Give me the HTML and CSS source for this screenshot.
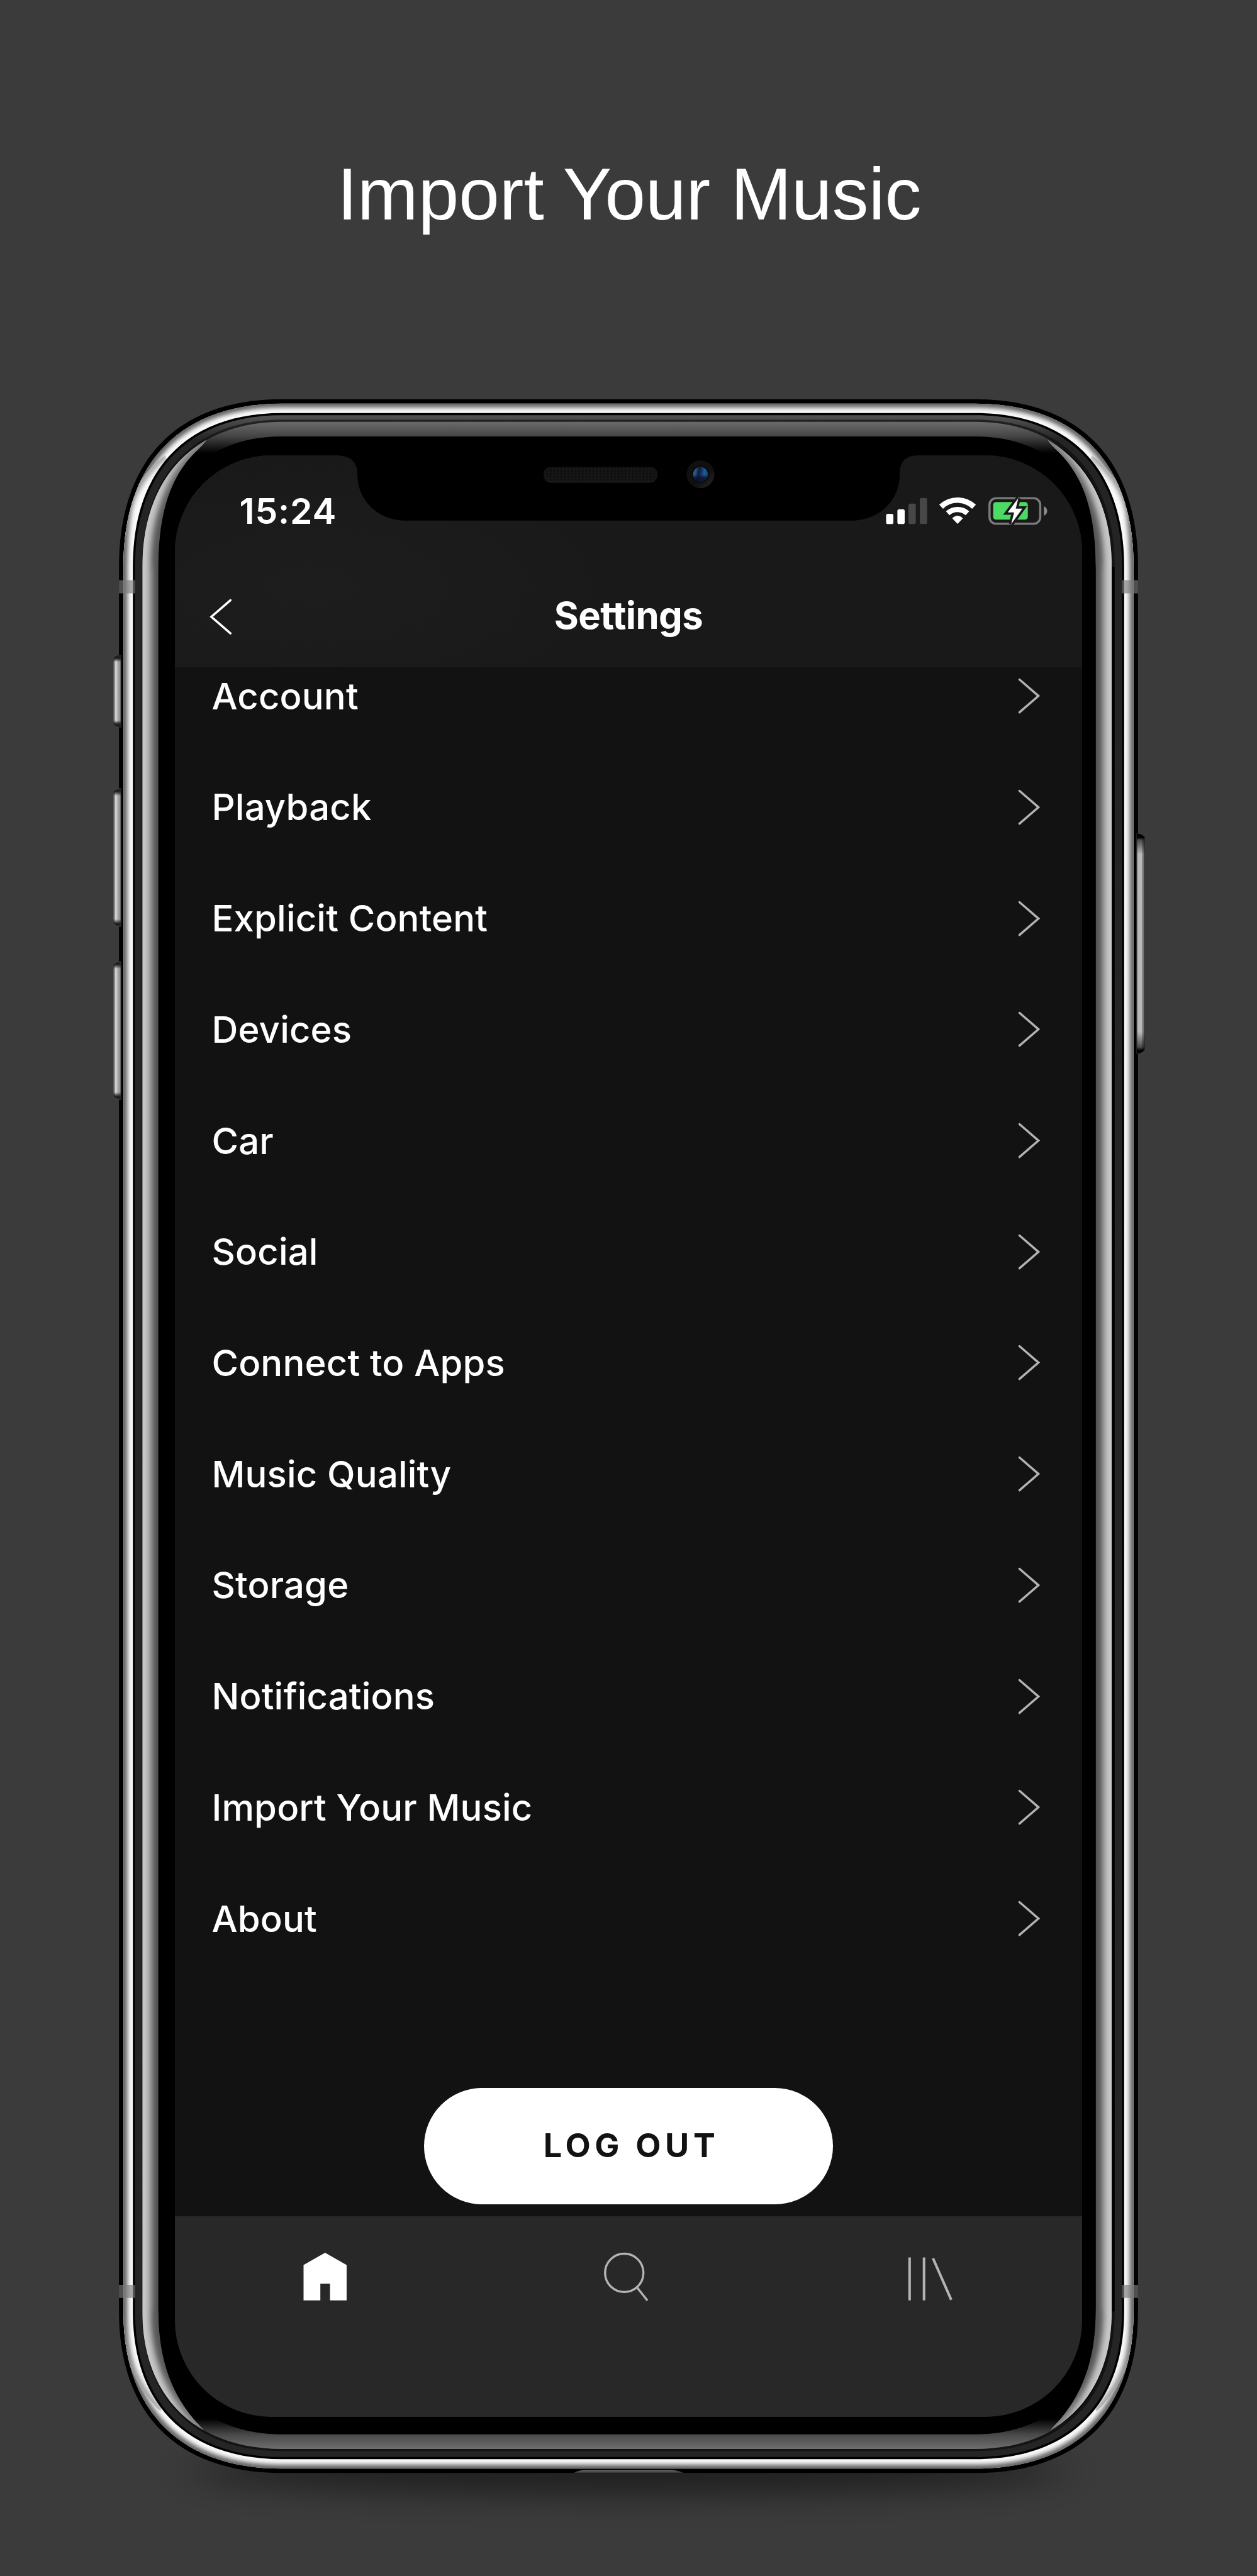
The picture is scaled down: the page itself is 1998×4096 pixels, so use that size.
FILE: index.html
```html
<!DOCTYPE html>
<html lang="en">
<head>
<meta charset="utf-8">
<title>Import Your Music</title>
<link rel="stylesheet" href="styles.css">
</head>
<body>
<main class="page">
  <h1 class="headline">Import Your Music</h1>

  <!-- Phone body -->
  <svg class="phone-frame" viewBox="0 0 3444 7060" aria-hidden="true">
    <defs>
      <path id="body-outer" d="M773 1094H2671C2960 1094 3118 1262 3118 1553V6335C3118 6614 2960 6778 2671 6778H773C484 6778 326 6614 326 6335V1553C326 1262 484 1094 773 1094Z"/>
      <path id="steel" d="M773 1106H2671C2952 1106 3106 1270 3106 1553V6335C3106 6606 2952 6766 2671 6766H773C492 6766 338 6606 338 6335V1553C338 1270 492 1106 773 1106Z"/>
      <path id="band-outer" d="M773 1156H2671C2911 1156 3046 1310 3046 1553V6335C3046 6566 2911 6712 2671 6712H773C533 6712 390 6566 390 6335V1553C390 1310 533 1156 773 1156Z"/>
      <path id="band-inner" d="M773 1196H2671C2880 1196 3002 1326 3002 1553V6335C3002 6542 2880 6672 2671 6672H773C564 6672 434 6542 434 6335V1553C434 1326 564 1196 773 1196Z"/>
      <clipPath id="steel-clip"><use href="#steel"/></clipPath>
      <clipPath id="band-clip"><use href="#band-outer"/></clipPath>
      <!-- Side reflections taper to a point at each corner -->
      <clipPath id="glint-clip"><path id="glint" d="M570 1100V1191C570 1208 548 1226 532 1242C470 1305 434 1400 434 1553V6335C434 6465 470 6560 532 6632C548 6650 561 6662 566 6673V6760H350V1100Z"/></clipPath>
      <path id="glint-inner" d="M570 1180V1191C570 1208 548 1226 532 1242C470 1305 434 1400 434 1553M434 6335C434 6465 470 6560 532 6632C548 6650 561 6662 566 6673V6680"/>
      <clipPath id="sliver-clip"><path d="M452 1247C400 1290 362 1340 350 1400C342 1450 338 1500 338 1553V6335C338 6385 342 6425 350 6458C362 6510 390 6560 440 6610L480 6500V1300Z"/></clipPath>
      <filter id="soft" filterUnits="userSpaceOnUse" x="200" y="1000" width="3044" height="5900"><feGaussianBlur stdDeviation="6"/></filter>
      <filter id="softer" filterUnits="userSpaceOnUse" x="200" y="1000" width="3044" height="5900"><feGaussianBlur stdDeviation="10"/></filter>
      <filter id="ground" filterUnits="userSpaceOnUse" x="0" y="6400" width="3444" height="660"><feGaussianBlur stdDeviation="62 42"/></filter>
      <linearGradient id="sliver-tone" gradientUnits="userSpaceOnUse" x1="0" y1="1240" x2="0" y2="6620">
        <stop offset="0" stop-color="#b0b0b0"/><stop offset=".024" stop-color="#8c8c8c"/><stop offset=".05" stop-color="#606060"/>
        <stop offset=".95" stop-color="#606060"/><stop offset=".976" stop-color="#8c8c8c"/><stop offset="1" stop-color="#b0b0b0"/>
      </linearGradient>
      <linearGradient id="band-fill" gradientUnits="userSpaceOnUse" x1="0" y1="1156" x2="0" y2="6712">
        <stop offset="0" stop-color="#6b6b6b"/><stop offset=".0072" stop-color="#444"/><stop offset=".0155" stop-color="#000"/>
        <stop offset=".985" stop-color="#000"/><stop offset=".9928" stop-color="#484848"/><stop offset="1" stop-color="#6e6e6e"/>
      </linearGradient>
      <linearGradient id="gasket-fill" gradientUnits="userSpaceOnUse" x1="0" y1="1138" x2="0" y2="6734">
        <stop offset="0" stop-color="#545454"/><stop offset=".012" stop-color="#242424"/><stop offset="1" stop-color="#252525"/>
      </linearGradient>
      <linearGradient id="rim-fill" gradientUnits="userSpaceOnUse" x1="0" y1="1150" x2="0" y2="6718">
        <stop offset="0" stop-color="#232323"/><stop offset=".012" stop-color="#131313"/><stop offset="1" stop-color="#131313"/>
      </linearGradient>
      <linearGradient id="key-left" x1="0" x2="1" y1="0" y2="0">
        <stop offset="0" stop-color="#4a4a4a"/><stop offset=".25" stop-color="#a8a8a8"/><stop offset=".3" stop-color="#dcdcdc"/><stop offset=".52" stop-color="#bcbcbc"/><stop offset=".58" stop-color="#a2a2a2"/><stop offset=".82" stop-color="#989898"/><stop offset="1" stop-color="#383838"/>
      </linearGradient>
      <linearGradient id="key-right" x1="0" x2="1" y1="0" y2="0">
        <stop offset="0" stop-color="#6a6a6a"/><stop offset=".2" stop-color="#b8b8b8"/><stop offset=".62" stop-color="#bcbcbc"/><stop offset=".66" stop-color="#959595"/><stop offset=".85" stop-color="#7c7c7c"/><stop offset="1" stop-color="#2e2e2e"/>
      </linearGradient>
      <linearGradient id="cap-short" x1="0" x2="0" y1="0" y2="1">
        <stop offset="0" stop-color="#202020"/><stop offset=".05" stop-color="#202020"/><stop offset=".1" stop-color="#202020" stop-opacity="0"/><stop offset=".9" stop-color="#202020" stop-opacity="0"/><stop offset=".95" stop-color="#202020"/><stop offset="1" stop-color="#202020"/>
      </linearGradient>
      <linearGradient id="cap-long" x1="0" x2="0" y1="0" y2="1">
        <stop offset="0" stop-color="#222"/><stop offset=".025" stop-color="#222"/><stop offset=".055" stop-color="#222" stop-opacity="0"/><stop offset=".945" stop-color="#222" stop-opacity="0"/><stop offset=".975" stop-color="#222"/><stop offset="1" stop-color="#222"/>
      </linearGradient>
      <linearGradient id="cap-power" x1="0" x2="0" y1="0" y2="1">
        <stop offset="0" stop-color="#000"/><stop offset=".018" stop-color="#000"/><stop offset=".03" stop-color="#000" stop-opacity=".6"/><stop offset=".095" stop-color="#000" stop-opacity="0"/><stop offset=".9" stop-color="#000" stop-opacity="0"/><stop offset=".97" stop-color="#000" stop-opacity=".6"/><stop offset=".985" stop-color="#000"/><stop offset="1" stop-color="#000"/>
      </linearGradient>
      <linearGradient id="port-fill" x1="0" x2="0" y1="0" y2="1">
        <stop offset="0" stop-color="#8a8a8a"/><stop offset=".5" stop-color="#484848"/><stop offset="1" stop-color="#333"/>
      </linearGradient>
    </defs>

    <ellipse cx="1722" cy="6775" rx="1190" ry="62" fill="#000" opacity=".46" filter="url(#ground)"/>

    <use href="#body-outer" fill="#000"/>
    <use href="#steel" fill="#fafafa"/>
    <g clip-path="url(#steel-clip)">
      <use href="#steel" fill="none" stroke="#606060" stroke-width="22" filter="url(#soft)"/>
      <g id="sliver" clip-path="url(#sliver-clip)">
        <path d="M330 1200H480V6700H330Z" fill="#fafafa"/>
        <path d="M452 1247C400 1290 362 1340 350 1400C342 1450 338 1500 338 1553V6335C338 6385 342 6425 350 6458C362 6510 390 6560 440 6610" fill="none" stroke="url(#sliver-tone)" stroke-width="22" filter="url(#soft)"/>
      </g>
      <use href="#sliver" transform="matrix(-1 0 0 1 3444 0)"/>
    </g>
    <path d="M773 1132H2671C2934 1132 3080 1288 3080 1553V6335C3080 6588 2934 6740 2671 6740H773C510 6740 364 6588 364 6335V1553C364 1288 510 1132 773 1132Z"/>
    <path d="M773 1138H2671C2930 1138 3074 1292 3074 1553V6335C3074 6584 2930 6734 2671 6734H773C514 6734 370 6584 370 6335V1553C370 1292 514 1138 773 1138Z" fill="url(#gasket-fill)"/>
    <path d="M773 1150H2671C2916 1150 3054 1304 3054 1553V6335C3054 6572 2916 6718 2671 6718H773C528 6718 389 6572 389 6335V1553C389 1304 528 1150 773 1150Z" fill="url(#rim-fill)"/>
    <path d="M3046 1553H3054V6335H3046Z"/>
    <use href="#band-outer" fill="url(#band-fill)"/>
    <use href="#band-inner" fill="#000"/>
    <g id="side-glint" clip-path="url(#band-clip)"><g clip-path="url(#glint-clip)">
      <use href="#glint" fill="#505050"/>
      <use href="#band-outer" fill="none" stroke="#c8c8c8" stroke-width="48" filter="url(#softer)"/>
      <use href="#glint-inner" fill="none" stroke="#585858" stroke-width="22" opacity=".85" filter="url(#softer)"/>
    </g></g>
    <use href="#side-glint" transform="matrix(-1 0 0 1 3436 0)"/>

    <!-- Antenna lines -->
    <path d="M326 1590H370V1626H326ZM3074 1590H3118V1626H3074ZM326 6262H370V6298H326ZM3074 6262H3118V6298H3074Z" fill="#7b7b7b" fill-opacity=".65"/>

    <!-- Side keys -->
    <path d="M332 1794H326Q310 1794 310 1812V1976Q310 1994 326 1994H332Z" fill="url(#key-left)"/>
    <path d="M332 1794H326Q310 1794 310 1812V1976Q310 1994 326 1994H332Z" fill="url(#cap-short)"/>
    <path d="M332 2160H326Q310 2163 310 2174V2524Q310 2537 326 2540H332Z" fill="url(#key-left)"/>
    <path d="M332 2160H326Q310 2163 310 2174V2524Q310 2537 326 2540H332Z" fill="url(#cap-long)"/>
    <path d="M332 2634H326Q310 2637 310 2648V2998Q310 3011 326 3014H332Z" fill="url(#key-left)"/>
    <path d="M332 2634H326Q310 2637 310 2648V2998Q310 3011 326 3014H332Z" fill="url(#cap-long)"/>
    <path d="M3114 2284H3120Q3130 2286 3136 2294V2876Q3134 2884 3120 2888H3114Z" fill="url(#key-right)"/>
    <path d="M3114 2284H3120Q3130 2286 3136 2294V2876Q3134 2884 3120 2888H3114Z" fill="url(#cap-power)"/>
    <path d="M1572 6778Q1582 6770 1605 6770H1840Q1862 6771 1872 6778Z" fill="url(#port-fill)"/>
  </svg>

  <section class="screen">
    <svg class="notch" viewBox="480 1248 2484 190" aria-hidden="true">
      <defs>
        <pattern id="mesh" width="9.8" height="8.6" patternUnits="userSpaceOnUse"><path d="M0 0H9.8V8.6H0Z" fill="#0d0d0d"/><path d="M3 0H7V8.6H3ZM0 3H9.8V6H0Z" fill="#171717"/></pattern>
        <linearGradient id="cam" x1="0" y1="0" x2="1" y2="1"><stop offset=".6" stop-color="#101010"/><stop offset="1" stop-color="#2a2a2a"/></linearGradient>
        <linearGradient id="lens" x1="0" y1="0" x2="1" y2=".15"><stop offset="0" stop-color="#2f6aa5"/><stop offset=".22" stop-color="#24558a"/><stop offset=".42" stop-color="#111c3c"/><stop offset=".6" stop-color="#16345f"/><stop offset=".8" stop-color="#1f5a98"/><stop offset="1" stop-color="#1b4d85"/></linearGradient>
        <linearGradient id="lens-shade" x1="0" y1="0" x2="0" y2="1"><stop offset=".5" stop-color="#0b1430" stop-opacity="0"/><stop offset=".75" stop-color="#0b1430" stop-opacity=".9"/></linearGradient>
      </defs>
      <path d="M900 1240V1248H918C962 1248 980 1265 980 1300C980 1375 1040 1427 1112 1427H2334C2406 1427 2466 1375 2466 1300C2466 1265 2480 1248 2520 1248H2540V1240Z"/>
      <rect x="1490" y="1282" width="312" height="41" rx="20.5" fill="#191919"/>
      <rect x="1490" y="1280" width="312" height="38" rx="19" fill="url(#mesh)"/>
      <circle cx="1920" cy="1300" r="38" fill="url(#cam)"/>
      <circle cx="1920" cy="1300" r="24" fill="#0b0b0b"/>
      <circle cx="1920" cy="1300" r="20" fill="url(#lens)"/>
      <circle cx="1920" cy="1300" r="20" fill="url(#lens-shade)"/>
    </svg>

    <header class="top">
      <div class="status">
        <span class="clock">15:24</span>
        <svg class="status-icons" viewBox="2420 1350 456 98" aria-label="Signal, Wi-Fi and charging battery">
          <rect x="2427.6" y="1407" width="20" height="28" rx="5" fill="#fff"/>
          <rect x="2458.6" y="1394.5" width="20" height="40.5" rx="5" fill="#fff"/>
          <rect x="2489" y="1379" width="20" height="56" rx="5" fill="#474747"/>
          <rect x="2520" y="1363.5" width="20" height="71.5" rx="5" fill="#474747"/>
          <g fill="none" stroke="#fff">
            <path d="M2578.5 1387.5A65 65 0 0 1 2668.5 1387.5" stroke-width="15"/>
            <path d="M2596.5 1405.5A40 40 0 0 1 2650.5 1405.5" stroke-width="14.5"/>
          </g>
          <path d="M2609 1419.5Q2623.5 1405 2638 1419.5L2623.5 1434.5Z" fill="#fff"/>
          <rect x="2711" y="1364" width="139" height="70" rx="18" fill="none" stroke="#7b7b7b" stroke-width="6"/>
          <rect x="2721" y="1374.5" width="95" height="48.5" rx="8" fill="#4cd964"/>
          <path d="M2860 1386Q2869 1390 2869 1399T2860 1412Z" fill="#8b8b8b"/>
          <path d="M2790 1364L2761 1403H2778.5L2770.5 1435L2801 1392.5H2783Z" fill="none" stroke="#191919" stroke-width="13"/>
          <path d="M2790 1364L2761 1403H2778.5L2770.5 1435L2801 1392.5H2783Z" fill="#fff"/>
        </svg>
      </div>
      <div class="nav">
        <svg class="back" viewBox="570 1636 70 106" aria-label="Back"><path d="M631 1643.5L578.5 1689L631 1734.5" fill="none" stroke="#fff" stroke-width="6" stroke-linecap="round"/></svg>
        <h2 class="nav-title">Settings</h2>
      </div>
    </header>

    <div class="content">
      <ul class="menu">
        <li class="row">Account<svg class="chevron" viewBox="0 0 66 102"><path d="M6 6L58 51L6 96"/></svg></li>
        <li class="row">Playback<svg class="chevron" viewBox="0 0 66 102"><path d="M6 6L58 51L6 96"/></svg></li>
        <li class="row">Explicit Content<svg class="chevron" viewBox="0 0 66 102"><path d="M6 6L58 51L6 96"/></svg></li>
        <li class="row">Devices<svg class="chevron" viewBox="0 0 66 102"><path d="M6 6L58 51L6 96"/></svg></li>
        <li class="row">Car<svg class="chevron" viewBox="0 0 66 102"><path d="M6 6L58 51L6 96"/></svg></li>
        <li class="row">Social<svg class="chevron" viewBox="0 0 66 102"><path d="M6 6L58 51L6 96"/></svg></li>
        <li class="row">Connect to Apps<svg class="chevron" viewBox="0 0 66 102"><path d="M6 6L58 51L6 96"/></svg></li>
        <li class="row">Music Quality<svg class="chevron" viewBox="0 0 66 102"><path d="M6 6L58 51L6 96"/></svg></li>
        <li class="row">Storage<svg class="chevron" viewBox="0 0 66 102"><path d="M6 6L58 51L6 96"/></svg></li>
        <li class="row">Notifications<svg class="chevron" viewBox="0 0 66 102"><path d="M6 6L58 51L6 96"/></svg></li>
        <li class="row">Import Your Music<svg class="chevron" viewBox="0 0 66 102"><path d="M6 6L58 51L6 96"/></svg></li>
        <li class="row">About<svg class="chevron" viewBox="0 0 66 102"><path d="M6 6L58 51L6 96"/></svg></li>
      </ul>
      <button class="logout" type="button">LOG OUT</button>
    </div>

    <nav class="tabs">
      <svg class="tab" viewBox="480 6075 828 549" aria-label="Home"><path d="M891.5 6175L950.5 6208.5V6305.5H905V6260H878.5V6305.5H832.5V6208.5Z" fill="#fff"/></svg>
      <svg class="tab" viewBox="1308 6075 828 549" aria-label="Search"><g fill="none" stroke="#b3b3b3" stroke-width="6"><circle cx="1710" cy="6230" r="52.5"/><path d="M1745 6270L1773.5 6306"/></g></svg>
      <svg class="tab" viewBox="2136 6075 828 549" aria-label="Your Library"><path d="M2492.5 6188V6305.5M2532 6188V6305.5M2556.5 6190L2606.5 6304" fill="none" stroke="#b3b3b3" stroke-width="7"/></svg>
    </nav>
  </section>
</main>
</body>
</html>
```
FILE: styles.css
```css
:root {
  /* one design unit: the artboard is 3444 units wide */
  --u: calc(1998px / 3444);
}

* { box-sizing: border-box; }

body {
  margin: 0;
  background: #3b3b3b;
  color: #fff;
  font-family: Inter, "Liberation Sans", sans-serif;
}

.page {
  position: relative;
  width: 1998px;
  height: 4096px;
  overflow: hidden;
  display: flex;
  flex-direction: column;
  background: #3b3b3b;
}

.headline {
  margin: 0;
  height: calc(1248 * var(--u));
  padding-bottom: calc(183 * var(--u));
  padding-left: calc(4 * var(--u));
  display: flex;
  align-items: center;
  justify-content: center;
  font: 400 calc(200 * var(--u)) "Liberation Sans", Arial, sans-serif;
}

.phone-frame {
  position: absolute;
  inset: 0;
  width: 100%;
  height: 100%;
}

.screen {
  position: relative;
  width: calc(2484 * var(--u));
  height: calc(5376 * var(--u));
  margin-left: calc(480 * var(--u));
  border-radius: calc(265 * var(--u));
  overflow: hidden;
  display: flex;
  flex-direction: column;
  background: #121212;
}

.notch {
  position: absolute;
  top: 0;
  left: 0;
  width: 100%;
}

.top {
  flex: none;
  height: calc(581 * var(--u));
  background: radial-gradient(ellipse 34% 62% at 15% 62%, #1d1d1d, #1b1b1b 60%, #191919) #191919;
}

.status {
  height: calc(304 * var(--u));
  padding: 0 calc(88 * var(--u)) 0 calc(176 * var(--u));
  display: flex;
  align-items: center;
  justify-content: space-between;
}

.clock {
  font-size: calc(98 * var(--u));
  font-weight: 600;
  letter-spacing: calc(1.5 * var(--u));
}

.status-icons {
  width: calc(456 * var(--u));
  height: calc(98 * var(--u));
}

.nav {
  height: calc(277 * var(--u));
  padding: 0 calc(90 * var(--u));
  display: grid;
  grid-template-columns: 1fr auto 1fr;
  align-items: center;
}

.back {
  width: calc(70 * var(--u));
  height: calc(106 * var(--u));
}

.nav-title {
  margin: 0;
  padding-bottom: calc(9 * var(--u));
  font-size: calc(103 * var(--u));
  font-weight: 700;
  letter-spacing: calc(-1 * var(--u));
}

.content {
  flex: 1;
  min-height: 0;
  overflow: hidden;
  display: flex;
  flex-direction: column;
  align-items: center;
}

.menu {
  /* scrolled slightly under the header */
  margin: calc(-73.5 * var(--u)) 0 0;
  padding: 0;
  width: 100%;
  flex: none;
  list-style: none;
}

.row {
  height: calc(304.6 * var(--u));
  padding: 0 calc(111 * var(--u)) 0 calc(100 * var(--u));
  display: flex;
  align-items: center;
  justify-content: space-between;
  font-size: calc(100 * var(--u));
  font-weight: 500;
  letter-spacing: calc(.3 * var(--u));
}

.chevron {
  width: calc(66 * var(--u));
  height: calc(102 * var(--u));
  fill: none;
  stroke: #b3b3b3;
  stroke-width: 6;
  stroke-linecap: round;
}

.logout {
  flex: none;
  width: calc(1119 * var(--u));
  height: calc(318.5 * var(--u));
  margin-top: calc(313 * var(--u));
  padding: 0 0 calc(7 * var(--u)) calc(16 * var(--u));
  border: 0;
  border-radius: calc(160 * var(--u));
  background: #fff;
  color: #121212;
  font: 700 calc(90 * var(--u)) Inter, sans-serif;
  letter-spacing: calc(11.5 * var(--u));
}

.tabs {
  flex: none;
  height: calc(549 * var(--u));
  display: flex;
  background: #282828;
}

.tab {
  flex: 1;
  height: 100%;
}
```
